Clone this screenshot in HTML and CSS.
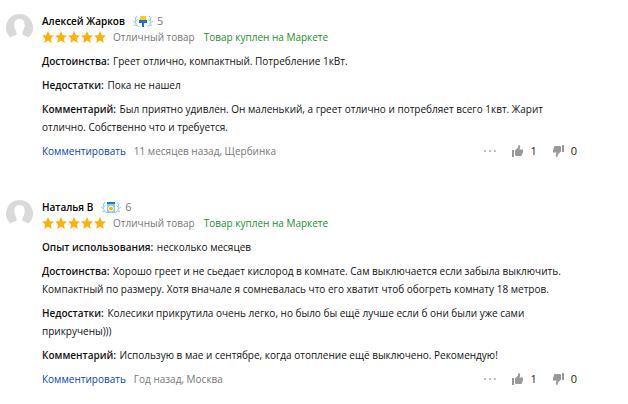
FILE: index.html
```html
<!DOCTYPE html>
<html lang="ru">
<head>
    <meta charset="UTF-8">
    <meta name="viewport" content="width=device-width, initial-scale=1.0">
    <title>Отзывы</title>
    <link rel="stylesheet" href="styles.css">
</head>
<body>
    <!-- Общие иконки -->
    <svg class="sprite" aria-hidden="true">
        <symbol id="avatar" viewBox="0 0 27 27">
            <path fill="#d9d9d9" d="M13.500 0A13.500 13.500 0 0 0 4.500 23.500C5.500 22.300 8 21.800 10.500 20.700V18C9.500 16.500 9 15 8.800 13.500C7.800 12.500 8 11 8.500 10.500C8.300 7 10.500 5 13.500 5S18.700 7 18.500 10.500C19 11 19.200 12.500 18.200 13.500C18 15 17.500 16.500 16.500 18V20.700C19 21.800 21.500 22.300 22.500 23.500A13.500 13.500 0 0 0 13.500 0Z"/>
        </symbol>
        <symbol id="stars" viewBox="0 0 65 12">
            <g fill="#ffb000">
                <path id="star" d="M6 0L7.800 4.200L12 4.500L8.800 7.400L9.800 12L6 9.500L2.200 12L3.200 7.400L0 4.500L4.200 4.200Z"/>
                <use href="#star" x="13"/>
                <use href="#star" x="26"/>
                <use href="#star" x="39"/>
                <use href="#star" x="52"/>
            </g>
        </symbol>
        <symbol id="laurel" viewBox="0 0 20 13">
            <g id="branch" fill="none" stroke="#8cc8f5">
                <path d="M4 1C1.500 4 1.500 9 6 12"/>
                <path d="M1.500 2.500L3 4M0 6L2 7.500M1 10L3.500 10.500M4.500 4.500L3 6"/>
            </g>
            <use href="#branch" transform="translate(20 0) scale(-1 1)"/>
        </symbol>
        <symbol id="up" viewBox="0 0 11 12">
            <path fill="#999" d="M0 5H2V12H0ZM3 5.500L6 2.500L6.500 0C8.200 0 8.500 1.500 8 2.800L7.500 4.500H11V7L9.500 11H4.500L3 10.500Z"/>
        </symbol>
    </svg>

    <main class="reviews">
        <article class="review">
            <svg class="avatar"><use href="#avatar"/></svg>
            <div class="content">
                <div class="author">
                    <span class="name">Алексей Жарков</span>
                    <svg class="badge" viewBox="0 0 20 13">
                        <use href="#laurel" width="20" height="13"/>
                        <path fill="#ffcc00" d="M7 1H13V5H7Z"/>
                        <path fill="#1d6fd8" d="M6 5H14V8H11V12H9V8H6Z"/>
                    </svg>
                    <span class="level">5</span>
                </div>
                <div class="rating">
                    <svg class="stars" role="img" aria-label="5 из 5"><use href="#stars"/></svg>
                    <span class="grade">Отличный товар</span>
                    <span class="bought">Товар куплен на Маркете</span>
                </div>
                <p><b>Достоинства:</b> Греет отлично, компактный. Потребление 1кВт.</p>
                <p><b>Недостатки:</b> Пока не нашел</p>
                <p><b>Комментарий:</b> Был приятно удивлен. Он маленький, а греет отлично и потребляет всего 1квт. Жарит отлично. Собственно что и требуется.</p>
                <div class="footer">
                    <a href="#">Комментировать</a>
                    <span class="date">11 месяцев назад, Щербинка</span>
                    <button class="more" aria-label="Ещё"><i></i><i></i><i></i></button>
                    <button class="vote" aria-label="Нравится, 1"><svg><use href="#up"/></svg>1</button>
                    <button class="vote down" aria-label="Не нравится, 0"><svg><use href="#up"/></svg>0</button>
                </div>
            </div>
        </article>

        <article class="review">
            <svg class="avatar"><use href="#avatar"/></svg>
            <div class="content">
                <div class="author">
                    <span class="name">Наталья В</span>
                    <svg class="badge" viewBox="0 0 20 13">
                        <use href="#laurel" width="20" height="13"/>
                        <path fill="#8cc8f5" d="M6 1H14V12H6Z"/>
                        <path fill="#2878c8" d="M6 1H14V3H6Z"/>
                        <circle cx="10" cy="7.500" r="2.500" fill="#ffb800" stroke="#fff"/>
                    </svg>
                    <span class="level">6</span>
                </div>
                <div class="rating">
                    <svg class="stars" role="img" aria-label="5 из 5"><use href="#stars"/></svg>
                    <span class="grade">Отличный товар</span>
                    <span class="bought">Товар куплен на Маркете</span>
                </div>
                <p><b>Опыт использования:</b> несколько месяцев</p>
                <p><b>Достоинства:</b> Хорошо греет и не сьедает кислород в комнате. Сам выключается если забыла выключить. Компактный по размеру. Хотя вначале я сомневалась что его хватит чтоб обогреть комнату 18 метров.</p>
                <p><b>Недостатки:</b> Колесики прикрутила очень легко, но было бы ещё лучше если б они были уже сами прикручены)))</p>
                <p><b>Комментарий:</b> Использую в мае и сентябре, когда отопление ещё выключено. Рекомендую!</p>
                <div class="footer">
                    <a href="#">Комментировать</a>
                    <span class="date">Год назад, Москва</span>
                    <button class="more" aria-label="Ещё"><i></i><i></i><i></i></button>
                    <button class="vote" aria-label="Нравится, 1"><svg><use href="#up"/></svg>1</button>
                    <button class="vote down" aria-label="Не нравится, 0"><svg><use href="#up"/></svg>0</button>
                </div>
            </div>
        </article>
    </main>
</body>
</html>
```
FILE: styles.css
```css
body {
    margin: 0;
    background: #fff;
    color: #111;
    font-family: "Open Sans", "Noto Sans", sans-serif;
    font-size: 10px;
    line-height: 18px;
}
.sprite {
    position: absolute;
    width: 0;
    height: 0;
}
.reviews {
    display: flex;
    flex-direction: column;
    gap: 40px;
    padding: 14px 51px 0 6px;
}
.review {
    display: flex;
    align-items: flex-start;
    gap: 9px;
}
.avatar {
    flex: none;
    width: 27px;
    height: 27px;
}
.content {
    flex: 1;
}
.author {
    display: flex;
    align-items: center;
    height: 14px;
}
.name {
    color: #000;
    font-weight: 600;
}
.badge {
    width: 20px;
    height: 13px;
    margin: 0 4px 0 8px;
}
.level,
.grade,
.date {
    color: #777;
}
.level,
.vote {
    font-size: 11px;
}
.rating {
    display: flex;
    align-items: center;
}
.stars {
    width: 65px;
    height: 12px;
    margin-right: 6px;
}
.bought {
    margin-left: 9px;
    color: #1a8f2c;
}
p {
    margin: 6px 0;
}
b {
    margin-right: 1px;
    font-weight: 600;
}
.footer {
    display: flex;
    align-items: center;
}
.footer a {
    margin-right: 8px;
    color: #04b;
    text-decoration: none;
}
button {
    display: flex;
    align-items: center;
    padding: 0;
    border: 0;
    background: none;
    color: #222;
    font-family: inherit;
    line-height: inherit;
    cursor: pointer;
}
.more {
    gap: 3px;
    margin-left: auto;
}
.more i {
    width: 2px;
    height: 2px;
    border-radius: 50%;
    background: #aaa;
}
.vote {
    gap: 7px;
    margin-left: 16px;
}
.vote svg {
    width: 11px;
    height: 12px;
}
.down svg {
    transform: rotate(180deg);
}
```
